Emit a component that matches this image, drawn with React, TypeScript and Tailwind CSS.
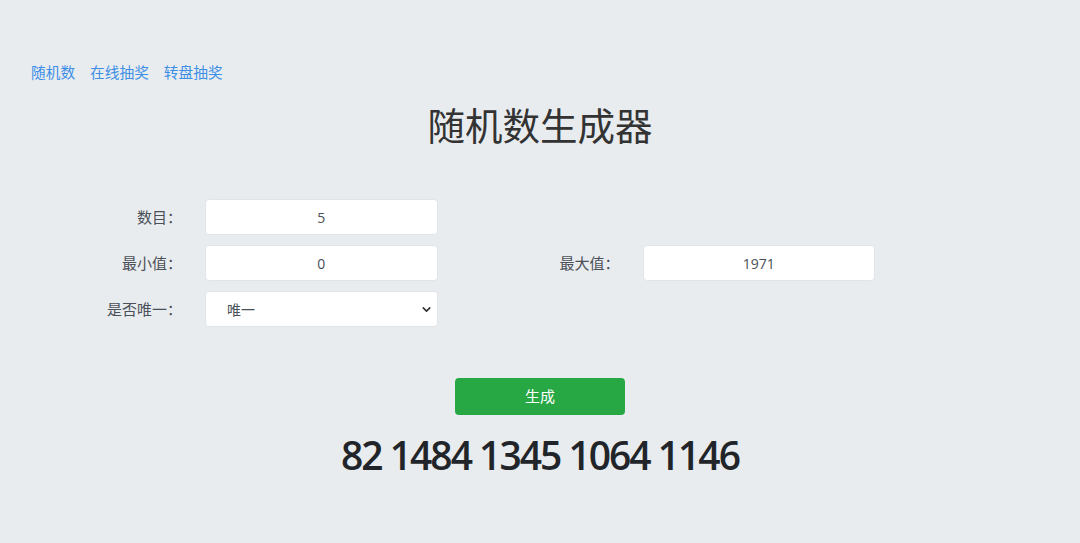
import { ChevronDown } from 'lucide-react'

const links = ['随机数', '在线抽奖', '转盘抽奖']
const result = [82, 1484, 1345, 1064, 1146]

const Label = ({ text }: { text: string }) => (
	<div className="w-[175px] pr-[8px] text-right text-[15px] text-[#495057]">{text}</div>
)

const Field = ({ value }: { value: string }) => (
	<div className="w-[262.5px] px-[15px]">
		<input
			readOnly
			value={value}
			className="w-full h-[36px] rounded-[4px] border border-[#e1e5e9] bg-white text-center text-[14px] text-[#495057] outline-none"
		/>
	</div>
)

export default function App() {
	return (
		<div
			className="min-h-[543px] w-full bg-[#e9ecef] px-[15px] text-[#212529]"
			style={{ fontFamily: '"Open Sans", "Noto Sans CJK SC", sans-serif' }}
		>
			{/* top links */}
			<div className="flex gap-[15px] pl-[16px] pt-[61px] h-[83px] text-[14.7px] leading-[22px]">
				{links.map((l) => (
					<a key={l} className="text-[#3d8fe6] cursor-pointer">
						{l}
					</a>
				))}
			</div>

			<h1 className="mt-[21px] text-center text-[37.5px] leading-[44px] font-normal text-[#333]">
				随机数生成器
			</h1>

			{/* form */}
			<div className="mt-[51px] flex flex-col gap-[10px]">
				<div className="flex items-center h-[36px]">
					<Label text="数目：" />
					<Field value="5" />
				</div>
				<div className="flex items-center h-[36px]">
					<Label text="最小值：" />
					<Field value="0" />
					<Label text="最大值：" />
					<Field value="1971" />
				</div>
				<div className="flex items-center h-[36px]">
					<Label text="是否唯一：" />
					<div className="w-[262.5px] px-[15px]">
						<div className="relative">
							<select className="w-full h-[36px] appearance-none rounded-[4px] border border-[#e1e5e9] bg-white pl-[21px] text-[14px] text-[#495057] outline-none">
								<option>唯一</option>
								<option>不唯一</option>
							</select>
							<ChevronDown
								size={13}
								strokeWidth={3}
								className="pointer-events-none absolute right-[5px] top-[12px] text-[#333]"
							/>
						</div>
					</div>
				</div>
			</div>

			<div className="mt-[51px] flex justify-center">
				<button className="w-[170px] h-[37px] rounded-[4px] bg-[#28a745] text-white text-[15px]">
					生成
				</button>
			</div>

			<div className="mt-[16px] text-center text-[39px] leading-[48px] font-semibold tracking-[-2px] text-[#212529]">
				{result.join(' ')}
			</div>
		</div>
	)
}
